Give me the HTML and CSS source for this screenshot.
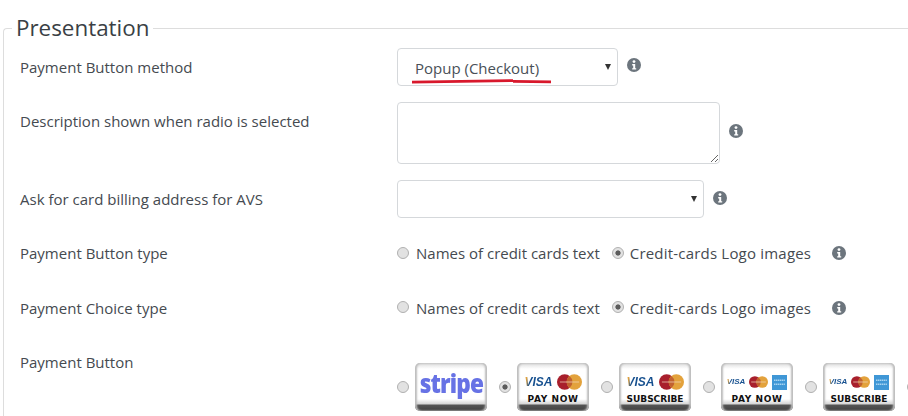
FILE: index.html
```html
<!DOCTYPE html>
<html lang="en">
<head>
<meta charset="utf-8">
<title>Presentation</title>
<link rel="stylesheet" href="styles.css">
</head>
<body>
<svg class="defs" width="0" height="0" aria-hidden="true">
  <symbol id="info" viewBox="0 0 14 14">
    <circle cx="7" cy="7" r="7" fill="#6c757d"/>
    <circle cx="7" cy="3.6" r="1.4" fill="#fff"/>
    <path d="M5.2 6h3v4.2h1v1.4H5.2v-1.4h1V7.4h-1z" fill="#fff"/>
  </symbol>
  <symbol id="mc" viewBox="0 0 26 16">
    <circle cx="8" cy="8" r="8" fill="#a81f2c"/>
    <circle cx="18" cy="8" r="8" fill="#e3a23c"/>
    <path d="M13 1.7a8 8 0 0 1 0 12.6a8 8 0 0 1 0-12.6z" fill="#c2622f"/>
    <path d="M3 7.4h20v1.2H3z" fill="#f3d9bd" opacity=".7"/>
  </symbol>
  <symbol id="amex" viewBox="0 0 15 15">
    <rect width="15" height="15" fill="#3f97d6"/>
    <path d="M2 5.2h11M2 9.2h11" stroke="#a8d4f1" stroke-width="1.4" stroke-dasharray="1.4 .5"/>
  </symbol>
</svg>
<main class="page">
<fieldset class="panel">
  <legend class="panel-title">Presentation</legend>

  <div class="row row-method">
    <label class="row-label">Payment Button method</label>
    <div class="row-control">
      <div class="select-wrap select-short">
        <select class="select"><option>Popup (Checkout)</option></select>
        <svg class="scribble" width="144" height="6" viewBox="0 0 144 6"><path d="M1 4.2L102 2.6M102 3.4L140 3.9" stroke="#d8182c" stroke-width="2.8" fill="none"/></svg>
      </div>
      <svg class="info info-top"><use href="#info"/></svg>
    </div>
  </div>

  <div class="row row-desc">
    <label class="row-label">Description shown when radio is selected</label>
    <div class="row-control">
      <textarea class="textarea"></textarea>
      <svg class="info info-mid"><use href="#info"/></svg>
    </div>
  </div>

  <div class="row row-avs">
    <label class="row-label">Ask for card billing address for AVS</label>
    <div class="row-control">
      <div class="select-wrap select-long">
        <select class="select"><option></option></select>
      </div>
      <svg class="info info-avs"><use href="#info"/></svg>
    </div>
  </div>

  <div class="row row-radio">
    <label class="row-label">Payment Button type</label>
    <div class="row-control radios">
      <label class="radio-item"><input class="radio" type="radio" name="t1">Names of credit cards text</label>
      <label class="radio-item"><input class="radio" type="radio" name="t1" checked>Credit-cards Logo images</label>
      <svg class="info info-radio"><use href="#info"/></svg>
    </div>
  </div>

  <div class="row row-radio">
    <label class="row-label">Payment Choice type</label>
    <div class="row-control radios">
      <label class="radio-item"><input class="radio" type="radio" name="t2">Names of credit cards text</label>
      <label class="radio-item"><input class="radio" type="radio" name="t2" checked>Credit-cards Logo images</label>
      <svg class="info info-radio"><use href="#info"/></svg>
    </div>
  </div>

  <div class="row row-buttons">
    <label class="row-label">Payment Button</label>
    <div class="row-control buttons">
      <label class="pick"><input class="radio" type="radio" name="b">
        <span class="pay pay-stripe"><span class="stripe">stripe</span></span></label>
      <label class="pick"><input class="radio" type="radio" name="b" checked>
        <span class="pay"><span class="logos"><span class="visa">VISA</span><svg class="mc"><use href="#mc"/></svg></span><span class="cta">PAY NOW</span></span></label>
      <label class="pick"><input class="radio" type="radio" name="b">
        <span class="pay"><span class="logos"><span class="visa">VISA</span><svg class="mc"><use href="#mc"/></svg></span><span class="cta cta-sub">SUBSCRIBE</span></span></label>
      <label class="pick"><input class="radio" type="radio" name="b">
        <span class="pay"><span class="logos logos-sm"><span class="visa">VISA</span><svg class="mc"><use href="#mc"/></svg><svg class="amex"><use href="#amex"/></svg></span><span class="cta">PAY NOW</span></span></label>
      <label class="pick"><input class="radio" type="radio" name="b">
        <span class="pay"><span class="logos logos-sm"><span class="visa">VISA</span><svg class="mc"><use href="#mc"/></svg><svg class="amex"><use href="#amex"/></svg></span><span class="cta cta-sub">SUBSCRIBE</span></span></label>
      <label class="pick"><input class="radio" type="radio" name="b"></label>
    </div>
  </div>
</fieldset>
</main>
</body>
</html>
```
FILE: styles.css
```css
* { box-sizing: border-box; }
html, body { margin: 0; height: 416px; overflow: hidden; background: #fff; }
body { font-family: "Open Sans", "Noto Sans", sans-serif; font-size: 15px; color: #454a50; }
.defs { display: block; height: 0; }
.page { padding: 11px 0 0 3px; width: 908px; }
.panel { margin: 0; padding: 0 0 0 16px; border: 1px solid #ddd; border-right: 0; border-bottom: 0; border-radius: 4px 0 0 0; width: 905px; height: 420px; min-width: 0; }
.panel-title { margin-left: -8px; padding: 0 4px; font-size: 22.4px; line-height: 34px; color: #3a3f45; }
.row { display: grid; grid-template-columns: 377px 1fr; }
.row-method { height: 57px; padding-top: 3px; }
.row-desc { height: 78px; }
.row-avs { height: 55px; }
.row-radio { height: 55px; }
.row-buttons { height: 70px; }
.row-label { line-height: 20px; padding-top: 9px; }
.row-radio .row-label { padding-top: 8px; }
.row-buttons .row-label { padding-top: 7px; }
.row-control { display: flex; align-items: flex-start; min-width: 0; }
.select-wrap { position: relative; height: 38px; }
.select-short { width: 221px; }
.select-long { width: 307px; }
.select-wrap::after { content: ""; position: absolute; right: 7px; top: 16px; border: 3.5px solid transparent; border-top: 6px solid #333; border-bottom: 0; }
.select { appearance: none; display: block; width: 100%; height: 38px; padding: 2px 16px 0 17px; font: inherit; color: #495057; background: #fff; border: 1px solid #d5d8db; border-radius: 4px; }
.scribble { position: absolute; left: 14px; top: 30px; }
.textarea { display: block; width: 323px; height: 62px; border: 1px solid #d5d8db; border-radius: 4px; resize: both; background: #fff; }
.info { width: 14px; height: 14px; flex: none; }
.info-top { margin: 10px 0 0 9px; }
.info-mid { margin: 22px 0 0 9px; }
.info-avs { margin: 11px 0 0 9px; }
.radios { align-items: center; height: 20px; }
.row-radio .row-control { margin-top: 8px; }
.radio-item { display: flex; align-items: center; margin-right: 12px; white-space: nowrap; }
.radio-item + .radio-item { letter-spacing: .2px; }
.radio-item + .radio-item .radio { margin-right: 6px; }
.radio { appearance: none; width: 12px; height: 12px; margin: 0 7px 0 0; border: 1px solid #b0b0b0; border-radius: 50%; background: #e2e2e2; flex: none; }
.radio:checked { background: radial-gradient(circle, #5c5c5c 0 2.2px, #e2e2e2 3px); }
.row-radio + .row-radio .radio { margin-bottom: 2px; }
.info-radio { margin-left: 9px; }
.buttons { overflow: hidden; white-space: nowrap; }
.pick { display: flex; align-items: center; width: 102px; flex: none; height: 48px; }
.pick .radio { margin: 0 6px 0 0; }
.row-buttons .row-control { margin-top: 18px; }
.pay { display: flex; flex-direction: column; align-items: center; width: 72px; height: 48px; padding-top: 11px; overflow: hidden; border-radius: 5px; background: linear-gradient(#d4d4d4 0, #eee 3px, #fff 6px, #fff 36px, #d4d4d4 41px, #555 42px, #3f3f3f 48px); box-shadow: inset 2px 0 2px #bdbdbd, inset -2px 0 2px #bdbdbd; }
.pay-stripe { padding-top: 2px; }
.stripe { font: 800 26px/36px "Open Sans", sans-serif; letter-spacing: -1px; color: #6772e5; transform: scaleX(.87); }
.logos { display: flex; align-items: center; gap: 4px; height: 16px; }
.visa { font: italic bold 12px/16px "Liberation Sans", sans-serif; color: transparent; background: linear-gradient(100deg, #e3a23c 0 10%, #16508f 22%); -webkit-background-clip: text; background-clip: text; }
.logos-sm .visa { font-size: 8px; }
.mc { width: 25px; height: 16px; }
.logos-sm .mc { width: 19px; height: 12px; }
.amex { width: 15px; height: 15px; }
.cta { font: bold 9px/14px "DejaVu Sans", sans-serif; letter-spacing: .6px; color: #111; margin-top: 2px; }
.cta-sub { letter-spacing: 0; }
```
